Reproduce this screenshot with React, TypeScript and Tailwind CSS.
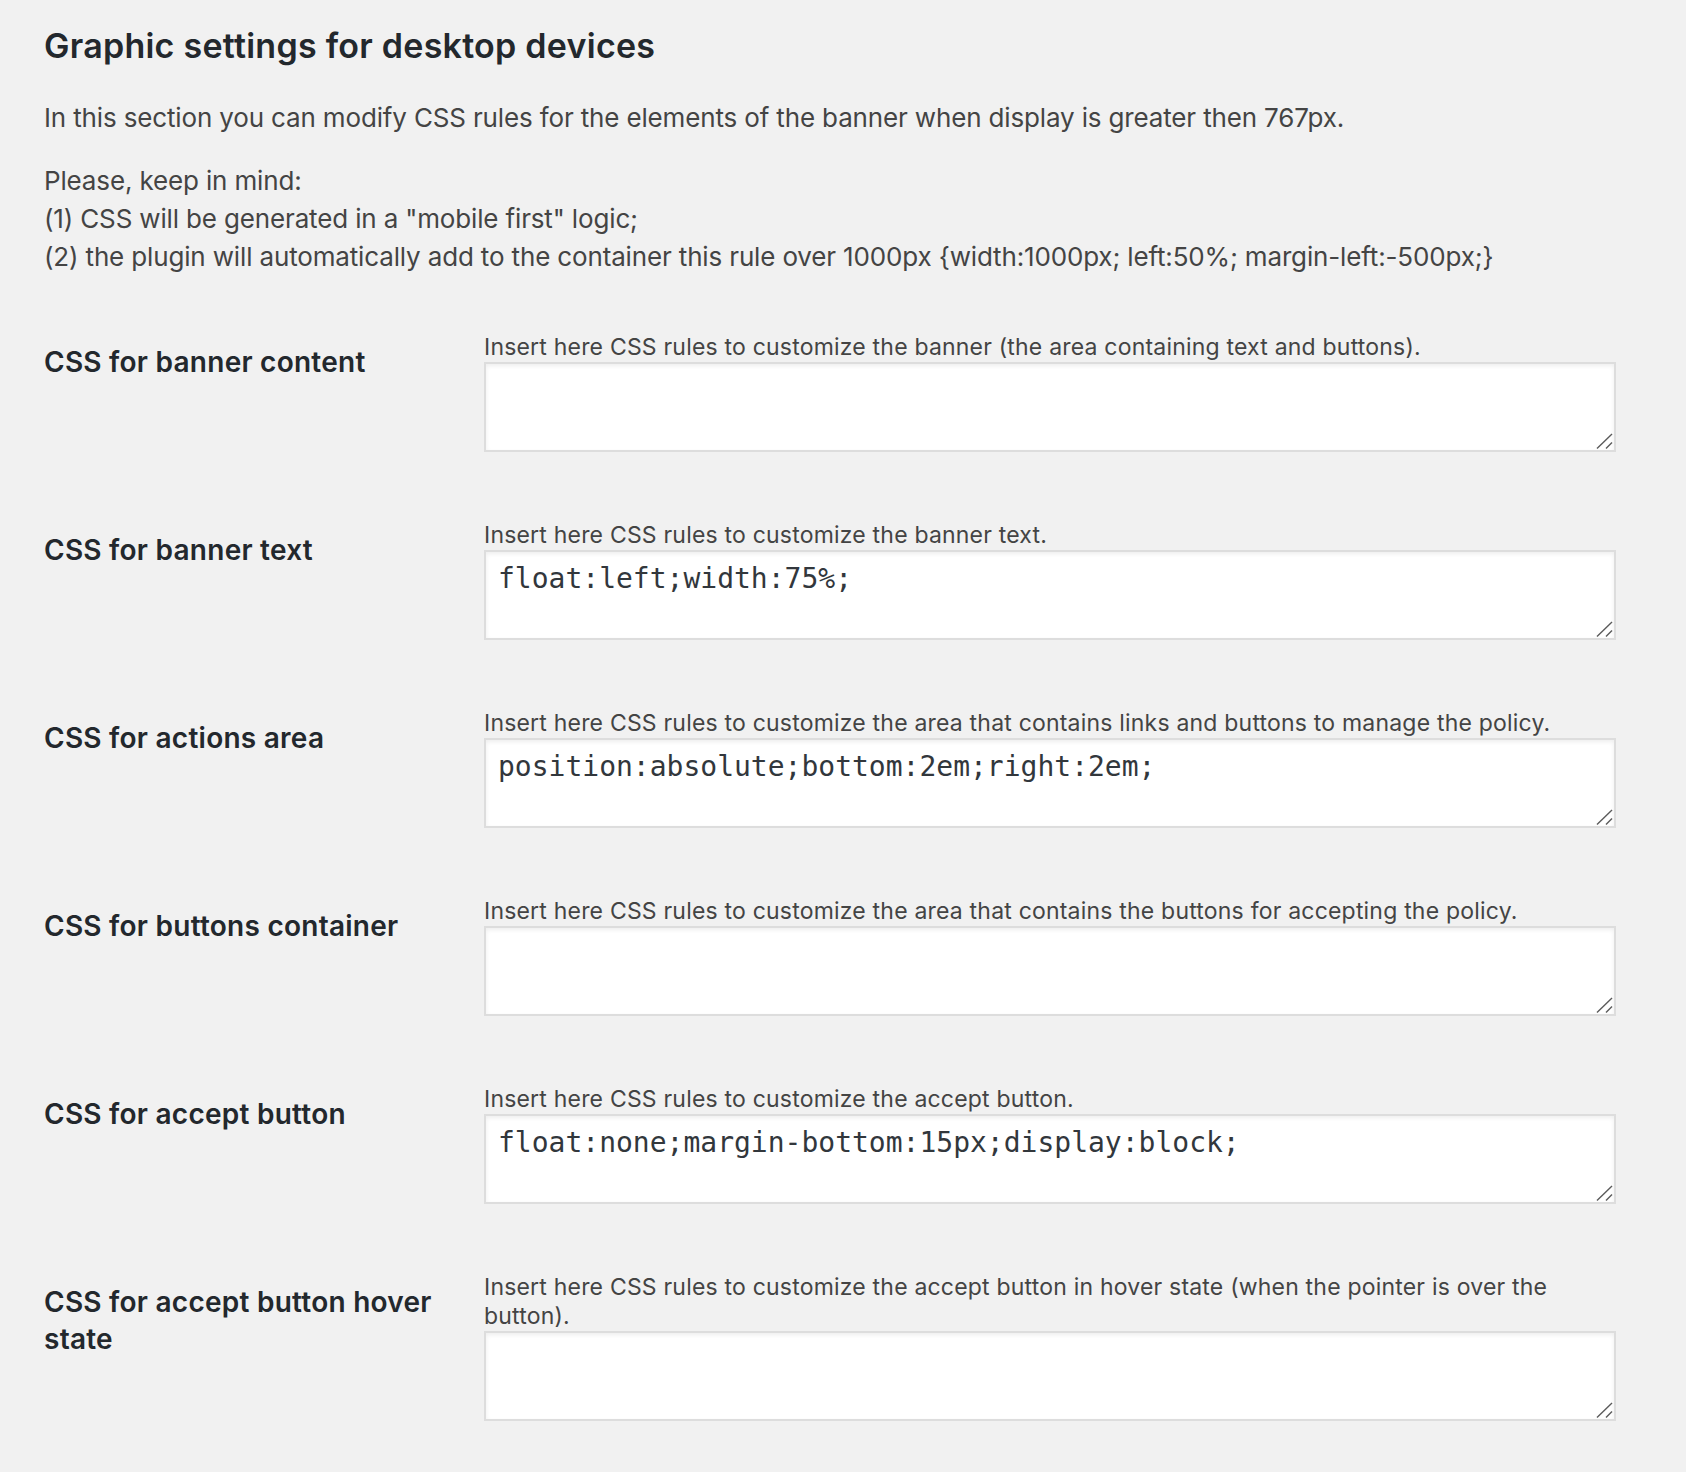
import React from "react";

type Row = { label: string; desc: string; value: string };

const rows: Row[] = [
  {
    label: "CSS for banner content",
    desc: "Insert here CSS rules to customize the banner (the area containing text and buttons).",
    value: "",
  },
  {
    label: "CSS for banner text",
    desc: "Insert here CSS rules to customize the banner text.",
    value: "float:left;width:75%;",
  },
  {
    label: "CSS for actions area",
    desc: "Insert here CSS rules to customize the area that contains links and buttons to manage the policy.",
    value: "position:absolute;bottom:2em;right:2em;",
  },
  {
    label: "CSS for buttons container",
    desc: "Insert here CSS rules to customize the area that contains the buttons for accepting the policy.",
    value: "",
  },
  {
    label: "CSS for accept button",
    desc: "Insert here CSS rules to customize the accept button.",
    value: "float:none;margin-bottom:15px;display:block;",
  },
  {
    label: "CSS for accept button hover state",
    desc: "Insert here CSS rules to customize the accept button in hover state (when the pointer is over the button).",
    value: "",
  },
];

function ResizeHandle() {
  return (
    <svg
      className="pointer-events-none absolute right-0 bottom-0"
      width="20"
      height="20"
      viewBox="0 0 20 20"
    >
      <line x1="1" y1="16.5" x2="16" y2="2" stroke="#5a5a5a" strokeWidth="1.4" />
      <line x1="10" y1="16.5" x2="16" y2="10.5" stroke="#5a5a5a" strokeWidth="1.4" />
    </svg>
  );
}

function SettingRow({ row }: { row: Row }) {
  return (
    <div className="flex pt-[34px] pb-[34px]">
      <div className="w-[440px] shrink-0 pr-[40px] pt-[12px] text-[28px] leading-[37px] tracking-[0.25px] font-semibold text-[#23282d]">
        {row.label}
      </div>
      <div className="w-[1132px] shrink-0">
        <p className="pt-[1px] text-[23px] leading-[29px] tracking-[0.2px] text-[#444]">{row.desc}</p>
        <div className="relative">
          <textarea
            defaultValue={row.value}
            spellCheck={false}
            className="block h-[90px] w-full resize-none border-2 border-[#ddd] bg-white px-[12px] pt-[7px] text-[28px] leading-[40px] text-[#32373c] shadow-[inset_0_2px_4px_rgba(0,0,0,0.07)] outline-none"
            style={{ fontFamily: '"DejaVu Sans Mono", monospace' }}
          />
          <ResizeHandle />
        </div>
      </div>
    </div>
  );
}

export default function App() {
  return (
    <div
      className="min-h-[1472px] w-[1686px] bg-[#f1f1f1] pl-[44px] pt-[26px]"
      style={{ fontFamily: 'Inter, "Noto Sans", sans-serif' }}
    >
      <h2 className="text-[34px] leading-[40px] tracking-[0.25px] font-semibold text-[#23282d]">
        Graphic settings for desktop devices
      </h2>
      <p className="mt-[33px] text-[26px] leading-[38px] tracking-[-0.15px] text-[#444]">
        In this section you can modify CSS rules for the elements of the banner when display is greater then 767px.
      </p>
      <p className="mt-[25px] text-[26px] leading-[38px] tracking-[-0.15px] text-[#444]">
        Please, keep in mind:
        <br />
        (1) CSS will be generated in a "mobile first" logic;
        <br />
        (2) the plugin will automatically add to the container this rule over 1000px {"{"}width:1000px; left:50%; margin-left:-500px;{"}"}
      </p>
      <div className="mt-[22px]">
        {rows.map((r) => (
          <SettingRow key={r.label} row={r} />
        ))}
      </div>
    </div>
  );
}
